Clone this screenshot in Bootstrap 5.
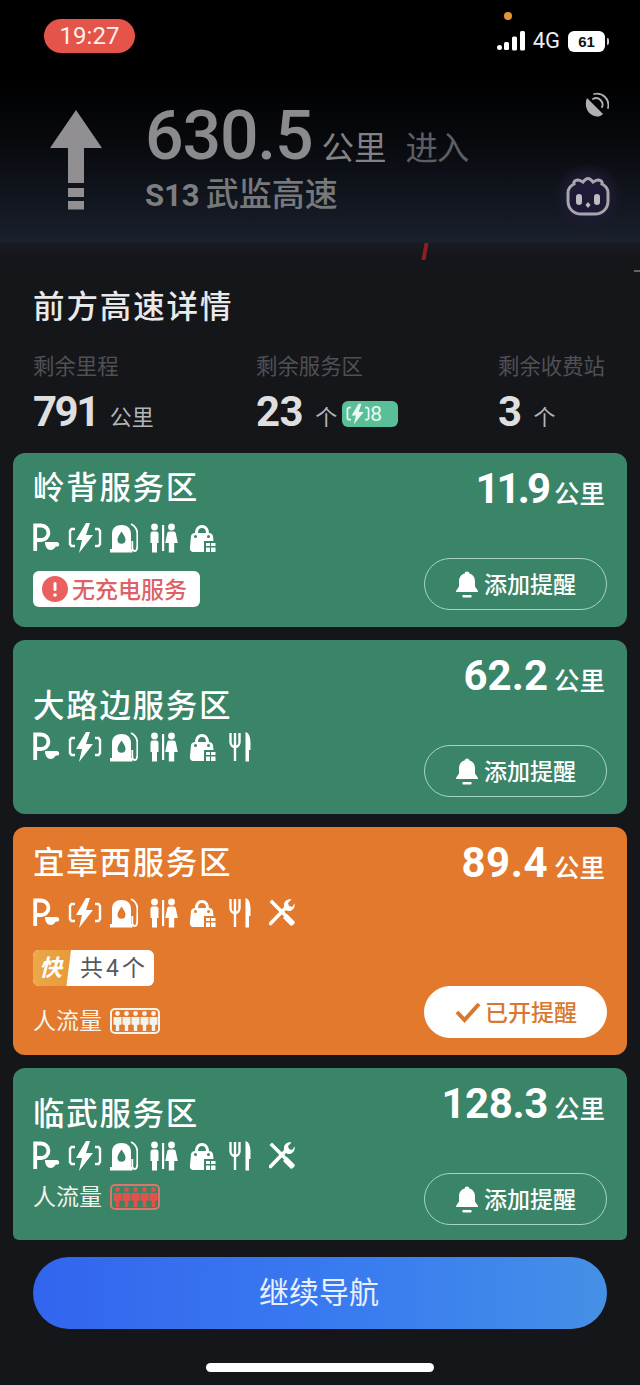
<!DOCTYPE html>
<html lang="zh">
<head>
<meta charset="utf-8">
<title>前方高速详情</title>
<link href="https://cdn.jsdelivr.net/npm/bootstrap@5.3.0/dist/css/bootstrap.min.css" rel="stylesheet">
<style>
:root{--cjk:"Noto Sans CJK SC","Liberation Sans",sans-serif;--num:Roboto,"Noto Sans CJK SC",sans-serif}
html,body{margin:0;background:#15161a}
body{width:640px;height:1385px;overflow:hidden;font-family:var(--cjk);color:#fff;position:relative}
.hd{height:243px;background:linear-gradient(#000 0,#000 80px,#07090d 140px,#141923 215px,#1b212c 243px);position:relative}
.stat-row{height:70px;padding:19px 31px 0 44px}
.pill{width:91px;height:34px;background:#e5544a;border-radius:17px;font:400 24px/34px Roboto,sans-serif;text-align:center;color:#fdf0ee}
.dot{width:8px;height:8px;border-radius:50%;background:#e0963a;position:absolute;left:504px;top:12px}
.stat-r{margin-top:11px;gap:8px;height:22px}
.g4{font:400 22px/22px Roboto,sans-serif;color:#eee}
.batt{width:37px;height:21px;background:#fff;border-radius:6px;color:#111;font:700 15px/21px "Liberation Sans",sans-serif;text-align:center}
.batt-tip{width:2px;height:7px;background:#ccc;margin-left:-6px;border-radius:0 2px 2px 0}
.nav-row{padding:12px 30px 0 50px;height:173px}
.arrow{width:52px;height:100px;margin-top:28px;flex:none}
.nav-txt{margin-left:43px;flex:1}
.big{font:500 68px/70px var(--num);color:#8b8b8d;margin-top:19px;letter-spacing:-1.200px}
.big-row{height:70px}
.u32{font:400 32.500px/36px var(--cjk);color:#828284;margin:0 0 7px 9px;letter-spacing:0}
.in32{font:400 32.500px/36px var(--cjk);color:#5d5e62;margin:0 0 7px 19px}
.road{font:500 33px/32px var(--cjk);color:#77787b;white-space:nowrap;margin-top:5px}
.road b{font:700 31px/32px var(--num);margin-right:6px;color:#7d7e81}
.side{width:50px;flex:none}
.sat{width:26px;height:26px;margin:10px 0 0 23px;display:block}
.cat-wrap{width:70px;height:70px;margin:44px 0 0 -7px;background:radial-gradient(circle,#241f3f 0,#1c1a30 42%,rgba(30,30,60,0) 70%);display:flex;align-items:center;justify-content:center}
.cat{width:44px;height:40px}
.tick{position:absolute;left:423px;top:243px;width:4px;height:17px;background:#8d1f22;transform:skewX(-10deg)}
.tick2{position:absolute;left:634px;top:270px;width:6px;height:2px;background:#666}
.panel{padding:0 13px;background:linear-gradient(#1a1b20,#15161a 16px);height:1142px}
.ttl{font:500 31.500px/38px var(--cjk);color:#e9e9ea;padding:42px 0 0 20px;height:84px;letter-spacing:1.900px}
.stats{padding:25px 0 0 20px;height:126px}
.sc1{width:223px}.sc2{width:242px}
.lab{font:400 21.400px/26px var(--cjk);color:#4f5054;padding-bottom:2px}
.val{font:700 42px/50px var(--num);color:#dfdfe0;margin-top:7px;height:50px;letter-spacing:-.5px}
.val-n{letter-spacing:-2.500px}
.unit{font:400 22px/26px var(--cjk);color:#b4b4b6;margin:0 0 9px 12px;letter-spacing:0}
.unit2{margin-left:12px}
.cb{width:56px;height:26px;border-radius:6px;background:#59bf98;margin:0 0 10px 5px;color:#eafaf3;font:400 21px/26px Roboto,sans-serif;padding-left:4px;letter-spacing:0}
.cb svg{width:24px;height:22px}
.sv{border-radius:12px;padding:0 20px 17px;margin-bottom:13px;color:#fff}
.sv-g{background:#3a8468}
.sv-o{background:#e2792d}
.h1c{height:174px}.h3c{height:228px}.h4c{height:172px;padding-bottom:15px;border-radius:12px 12px 6px 6px;margin-bottom:0}
.nm{font:500 31.500px/36px var(--cjk);letter-spacing:1.700px;white-space:nowrap;padding-bottom:4px}
.pt14{padding-top:14px}.pt15{padding-top:15px}.pt45{padding-top:45px}.pt25{padding-top:25px}
.ics{height:32px;gap:8px}
.ics svg{height:30px;display:block}
.m15{margin-top:15px}.m17{margin-top:17px}.m6{margin-top:6px}.m7{margin-top:7px}.m21{margin-top:21px}.m11{margin-top:11px}
.i-p{width:27px}.i-c{width:34px}.i-f{width:28px}.i-t{width:29px;margin-left:3px}.i-s{width:27px;margin-left:3px}.i-d{width:22px;margin-left:5px}.i-x{width:26px;margin-left:10px}
.warn{height:36px;width:167px;background:#fff;border-radius:6px;color:#dd6166;font:500 23px/34px var(--cjk);padding:0 0 2px 9px;gap:4px;white-space:nowrap}
.warn svg{width:26px;height:26px;flex:none;margin-top:2px}
.fast{height:36px;width:121px;border-radius:6px;background:#fff;overflow:hidden;color:#55585e;font:400 23px/33px var(--cjk);position:relative}
.fast-l{width:38px;background:linear-gradient(90deg,#e9a94a,#e99a3a);color:#fff;font-style:italic;font-weight:700;text-align:center;clip-path:polygon(0 0,100% 0,88% 100%,0 100%);padding-right:3px}
.fast-r{padding-left:9px;white-space:nowrap}
.fast-r span{font-family:Roboto,sans-serif;margin:0 3px}
.crowd{height:28px;gap:8px;font:400 23px/24px var(--cjk);color:#f3f3ee}
.crowd-t{padding-bottom:4px}
.ppl{width:50px;height:26px;border:2px solid currentColor;border-radius:5px;padding:1px 0;justify-content:center}
.ppl svg{width:9px;height:20px;flex:none}
.ppl-r{color:#d9776c}
.ppl-r svg{color:#e2524b}
.dist{font:700 42px/44px var(--num);white-space:nowrap;text-align:right;margin-right:2px}
.dist span{font:500 25.500px/42px var(--cjk);margin-left:6px;letter-spacing:0}
.dist-n{letter-spacing:-3px}
.dist-m{letter-spacing:-.4px}
.dist-w{letter-spacing:.5px}
.rc{padding-top:14px}
.rbtn{width:183px;height:52px;border-radius:26px;border:1.500px solid #a7d3c2;color:#fff;background:transparent;font:500 23px/1 var(--cjk);gap:5px;padding:0 0 2px}
.rbtn:hover,.rbtn:focus{color:#fff;border-color:#a7d3c2}
.rbtn svg{width:24px;height:28px;margin-top:2px}
.rbtn-on,.rbtn-on:hover{background:#fff;border-color:#fff;color:#d9772f;gap:3px}
.rbtn-on svg{width:28px;height:24px}
.go{width:574px;height:72px;margin:17px 0 0 20px;border-radius:36px;background:linear-gradient(90deg,#3265ee,#3a7df0 60%,#4590e6);color:#e9f0ff;font:400 30px/66px var(--cjk);border:0;padding:0 2px 6px 0;display:block}
.home{width:228px;height:9px;border-radius:5px;background:#fff;margin:34px 0 0 193px}
</style>
</head>
<body>
<svg width="0" height="0" class="position-absolute">
<defs>
<symbol id="s-p" viewBox="0 0 27 30"><path d="M2.200 28V2.500h6a6.700 6.700 0 0 1 0 14.500h-6" fill="none" stroke="currentColor" stroke-width="3.800"/><path d="M12 19h11.800c.3 0 .6 0 .8.200a2.300 2.300 0 0 1 0 4.400c-.7.100-1.300-.1-1.800 0-1 1.900-2.900 3.400-5 3.400-3.600 0-5.800-3.400-5.800-8z" fill="currentColor"/></symbol>
<symbol id="s-c" viewBox="0 0 34 30"><path d="M7 6H3.500L2 8v13l1.500 2H7M27 6h3.500L32 8v13l-1.500 2H27" fill="none" stroke="currentColor" stroke-width="2.400"/><path d="M18 0 8 17h6l-3 13 14-18h-7l4-12z" fill="currentColor"/></symbol>
<symbol id="s-f" viewBox="0 0 28 30"><path fill-rule="evenodd" fill="currentColor" d="M2 26V11C2 5 6 2 11.500 2S21 5 21 11v15h1.500v3.500H0V26zM11.500 8.500c-2 3-4 5.500-4 8.200a4 4 0 0 0 8 0c0-2.700-2-5.200-4-8.200z"/><path d="M21 1c4 2 6 5 6.300 9v12c0 4-1 6-2.600 6S22.300 26 22.300 24V18" fill="none" stroke="currentColor" stroke-width="1.800"/></symbol>
<symbol id="s-t" viewBox="0 0 29 30"><circle cx="5.500" cy="4" r="3.400" fill="currentColor"/><path d="M1.500 11c0-2 1.300-2.500 2.700-2.500h2.600c1.400 0 2.700.5 2.700 2.500v9H8v9.500H3V20H1.500z" fill="currentColor"/><rect x="13" y="2" width="2.200" height="26" fill="currentColor"/><circle cx="22.500" cy="4" r="3.400" fill="currentColor"/><path d="M20.500 8.500h4c1.500 0 2 .8 2.300 2l2 9.500h-3.600v9.500h-5.400V20h-3.600l2-9.500c.3-1.200.8-2 2.300-2z" fill="currentColor"/></symbol>
<symbol id="s-s" viewBox="0 0 27 30"><path fill-rule="evenodd" fill="currentColor" d="M2 13c.5-2 2-3 4-3 0-5 3-8 7-8s7 3 7 8c2 0 3.500 1 4 3l.5 5H15v11H5c-3 0-4.500-1.500-4-5zM9 10h8c0-3.500-1.500-5-4-5s-4 1.500-4 5zM6.500 12a1.500 1.500 0 1 0 0 3 1.500 1.500 0 0 0 0-3zm13 0a1.500 1.500 0 1 0 0 3 1.500 1.500 0 0 0 0-3z"/><path fill="currentColor" d="M17 20h4v3h-4zM22 20h4.500v3H22zM17 24.500h4V29h-4zM22 24.500h4.500V29H22z"/></symbol>
<symbol id="s-d" viewBox="0 0 22 30"><path d="M1.500 1v9c0 3 1.900 5 4.500 5s4.500-2 4.500-5V1M6 1v28" fill="none" stroke="currentColor" stroke-width="2.400"/><path d="M16.500 0c3.500 1 5 5 5 11v7H20v11.500h-3.500z" fill="currentColor"/></symbol>
<symbol id="s-x" viewBox="0 0 26 30"><path d="M3 4 23 24" stroke="currentColor" stroke-width="3.500" fill="none" stroke-linecap="square"/><path d="M18 16l7.500 7.500c1 1.500-2.500 5-4 4L14 20z" fill="currentColor"/><path d="M1.500 25.500 17 9.500" stroke="currentColor" stroke-width="3.600" fill="none" stroke-linecap="round"/><path d="M15 6c.5-3 4-5.500 7.500-4.500L19 5l1 3 3.200 1 2.300-3.500c1 3.500-1.500 7-4.500 7.500-2 .3-4-.5-5-2.500S14.700 8 15 6z" fill="currentColor"/></symbol>
<symbol id="s-u" viewBox="0 0 9 20"><circle cx="4.500" cy="2.500" r="2.400" fill="currentColor"/><path d="M.5 6h8v7.500l-2.300.5v6H2.800v-6L.5 13.500z" fill="currentColor"/></symbol>
<symbol id="s-b" viewBox="0 0 24 28"><path d="M12 1.500c1.300 0 2.200.8 2.400 2 3.700 1 5.600 4 5.600 8v5l3 4.500v1H1v-1L4 16.500v-5c0-4 1.900-7 5.600-8 .2-1.200 1.100-2 2.400-2zM8 25h8a1.500 1.500 0 0 1 0 2.500H8A1.500 1.500 0 0 1 8 25z" fill="currentColor"/></symbol>
</defs>
</svg>

<header class="hd">
  <div class="stat-row d-flex justify-content-between">
    <div class="pill">19:27</div>
    <span class="dot"></span>
    <div class="stat-r d-flex align-items-center">
      <svg width="28" height="20" viewBox="0 0 28 20"><circle cx="2.500" cy="16.500" r="2.500" fill="#fff"/><rect x="7" y="11" width="5" height="8" rx="1.500" fill="#fff"/><rect x="15" y="5.500" width="5" height="14" rx="1.500" fill="#fff"/><rect x="23" y="0" width="5" height="19.500" rx="1.500" fill="#fff"/></svg>
      <span class="g4">4G</span>
      <span class="batt">61</span>
      <span class="batt-tip"></span>
    </div>
  </div>
  <div class="nav-row d-flex">
    <svg class="arrow" viewBox="0 0 52 100"><path d="M26 0 52 38H34V73H18V38H0z" fill="#918f91"/><rect x="18" y="78" width="16" height="9" fill="#918f91"/><rect x="18" y="91" width="16" height="8.500" fill="#918f91"/></svg>
    <div class="nav-txt">
      <div class="big big-row d-flex align-items-end">630.5<span class="u32">公里</span><span class="in32">进入</span></div>
      <div class="road"><b>S13</b>武监高速</div>
    </div>
    <div class="side">
      <svg class="sat" viewBox="0 0 26 26"><path d="M4 6 20 22c-2 2.500-6 3.500-10 1.500C4 21 1 13 4 6z" fill="#b0b0b3"/><path d="M10 7c2.500-1.500 5.500-1 7.500 1S20 13 19 15M11 2c4-1 8 0 11 3s4 7 3 11" fill="none" stroke="#b0b0b3" stroke-width="1.800" stroke-linecap="round"/></svg>
      <div class="cat-wrap">
        <svg class="cat" viewBox="0 0 44 40"><path d="M8 7c-1-3 3-5 6-3.500 2 1 3 1.500 3 1.500C19 2.500 20.500 1.500 22 1.500s3 1 5 3.500c0 0 1-.5 3-1.500 3-1.500 7 .5 6 3.500 4 2 6 5 6 9v8c0 8-6 13-13 13H15C8 37 2 32 2 24v-8c0-4 2-7 6-9z" fill="#1e1a35" stroke="#a7a6ad" stroke-width="3"/><rect x="10" y="17" width="6" height="11" rx="3" fill="#bdbcc2"/><rect x="28" y="17" width="6" height="11" rx="3" fill="#bdbcc2"/><path d="M22 25l2.500 3-2.500 3-2.500-3z" fill="#bdbcc2"/></svg>
      </div>
    </div>
  </div>
  <span class="tick"></span>
</header>
<span class="tick2"></span>

<main class="panel">
  <div class="ttl">前方高速详情</div>
  <div class="stats d-flex">
    <div class="sc1">
      <div class="lab">剩余里程</div>
      <div class="val val-n d-flex align-items-end">791<span class="unit">公里</span></div>
    </div>
    <div class="sc2">
      <div class="lab">剩余服务区</div>
      <div class="val d-flex align-items-end">23<span class="unit unit2">个</span><span class="cb d-flex align-items-center"><svg viewBox="0 0 34 30"><use href="#s-c"/></svg>8</span></div>
    </div>
    <div>
      <div class="lab">剩余收费站</div>
      <div class="val d-flex align-items-end">3<span class="unit unit2">个</span></div>
    </div>
  </div>

  <section class="sv sv-g h1c d-flex justify-content-between">
    <div class="pt14">
      <div class="nm">岭背服务区</div>
      <div class="ics d-flex align-items-center m15">
        <svg class="i-p"><use href="#s-p"/></svg><svg class="i-c"><use href="#s-c"/></svg><svg class="i-f"><use href="#s-f"/></svg><svg class="i-t"><use href="#s-t"/></svg><svg class="i-s"><use href="#s-s"/></svg>
      </div>
      <div class="warn d-flex align-items-center m17"><svg viewBox="0 0 26 26"><circle cx="13" cy="13" r="13" fill="#e9605f"/><rect x="11.500" y="6" width="3" height="9" rx="1.500" fill="#fff"/><circle cx="13" cy="19" r="1.800" fill="#fff"/></svg>无充电服务</div>
    </div>
    <div class="rc d-flex flex-column justify-content-between align-items-end">
      <div class="dist dist-n">11.9<span>公里</span></div>
      <button type="button" class="btn rbtn d-flex align-items-center justify-content-center"><svg><use href="#s-b"/></svg>添加提醒</button>
    </div>
  </section>

  <section class="sv sv-g h1c d-flex justify-content-between">
    <div class="pt45">
      <div class="nm">大路边服务区</div>
      <div class="ics d-flex align-items-center m6">
        <svg class="i-p"><use href="#s-p"/></svg><svg class="i-c"><use href="#s-c"/></svg><svg class="i-f"><use href="#s-f"/></svg><svg class="i-t"><use href="#s-t"/></svg><svg class="i-s"><use href="#s-s"/></svg><svg class="i-d"><use href="#s-d"/></svg>
      </div>
    </div>
    <div class="rc d-flex flex-column justify-content-between align-items-end">
      <div class="dist">62.2<span>公里</span></div>
      <button type="button" class="btn rbtn d-flex align-items-center justify-content-center"><svg><use href="#s-b"/></svg>添加提醒</button>
    </div>
  </section>

  <section class="sv sv-o h3c d-flex justify-content-between">
    <div class="pt15">
      <div class="nm">宜章西服务区</div>
      <div class="ics d-flex align-items-center m15">
        <svg class="i-p"><use href="#s-p"/></svg><svg class="i-c"><use href="#s-c"/></svg><svg class="i-f"><use href="#s-f"/></svg><svg class="i-t"><use href="#s-t"/></svg><svg class="i-s"><use href="#s-s"/></svg><svg class="i-d"><use href="#s-d"/></svg><svg class="i-x"><use href="#s-x"/></svg>
      </div>
      <div class="fast d-flex m21"><div class="fast-l">快</div><div class="fast-r">共<span>4</span>个</div></div>
      <div class="crowd d-flex align-items-center m21"><span class="crowd-t">人流量</span>
        <div class="ppl d-flex"><svg><use href="#s-u"/></svg><svg><use href="#s-u"/></svg><svg><use href="#s-u"/></svg><svg><use href="#s-u"/></svg><svg><use href="#s-u"/></svg></div>
      </div>
    </div>
    <div class="rc d-flex flex-column justify-content-between align-items-end">
      <div class="dist dist-w">89.4<span>公里</span></div>
      <button type="button" class="btn rbtn rbtn-on d-flex align-items-center justify-content-center"><svg viewBox="0 0 28 24"><path d="M3 12l7.500 8L25 4" fill="none" stroke="currentColor" stroke-width="4"/></svg>已开提醒</button>
    </div>
  </section>

  <section class="sv sv-g h4c d-flex justify-content-between">
    <div class="pt25">
      <div class="nm">临武服务区</div>
      <div class="ics d-flex align-items-center m7">
        <svg class="i-p"><use href="#s-p"/></svg><svg class="i-c"><use href="#s-c"/></svg><svg class="i-f"><use href="#s-f"/></svg><svg class="i-t"><use href="#s-t"/></svg><svg class="i-s"><use href="#s-s"/></svg><svg class="i-d"><use href="#s-d"/></svg><svg class="i-x"><use href="#s-x"/></svg>
      </div>
      <div class="crowd d-flex align-items-center m11"><span class="crowd-t">人流量</span>
        <div class="ppl ppl-r d-flex"><svg><use href="#s-u"/></svg><svg><use href="#s-u"/></svg><svg><use href="#s-u"/></svg><svg><use href="#s-u"/></svg><svg><use href="#s-u"/></svg></div>
      </div>
    </div>
    <div class="rc d-flex flex-column justify-content-between align-items-end">
      <div class="dist dist-m">128.3<span>公里</span></div>
      <button type="button" class="btn rbtn d-flex align-items-center justify-content-center"><svg><use href="#s-b"/></svg>添加提醒</button>
    </div>
  </section>

  <button type="button" class="btn go text-center">继续导航</button>
  <div class="home"></div>
</main>
</body>
</html>
